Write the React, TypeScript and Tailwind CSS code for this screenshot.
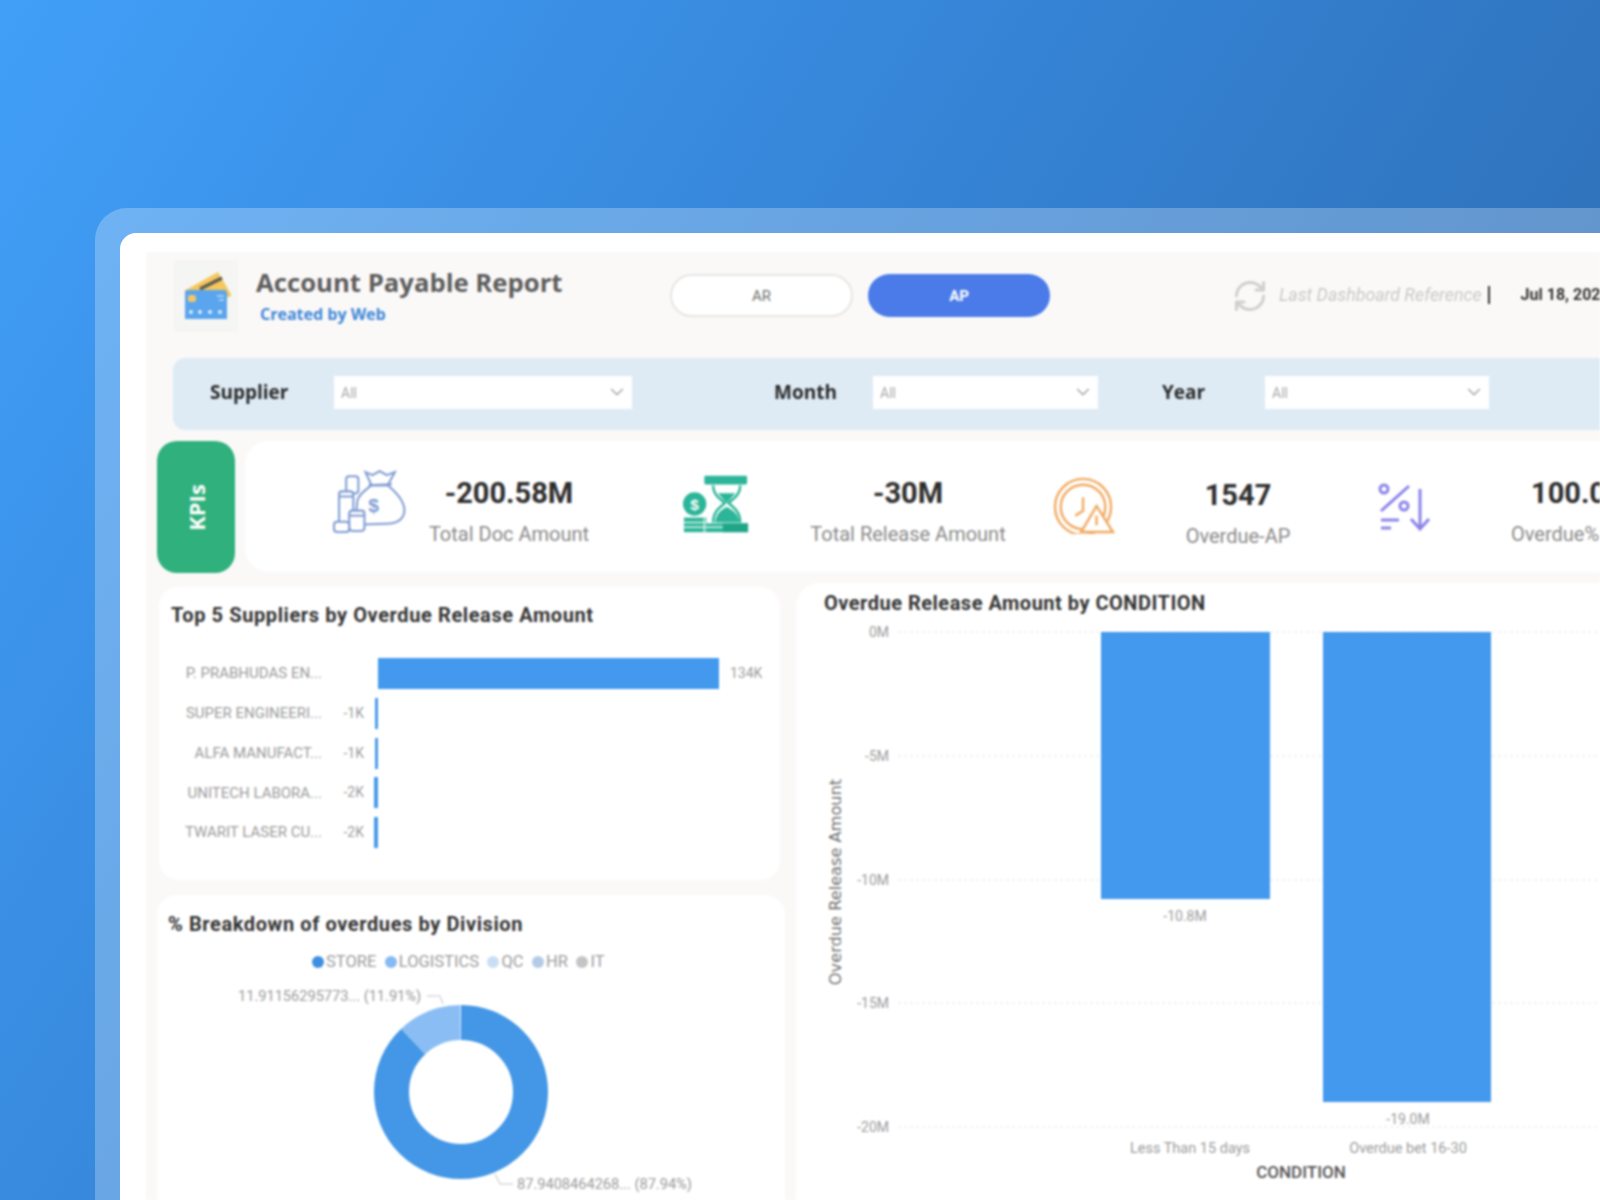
import React from "react";
import { ChevronDown, RefreshCw } from "lucide-react";

const din = "font-['Roboto',sans-serif]";
const seg = "font-['Open_Sans',sans-serif]";

function CardIcon() {
  return (
    <svg viewBox="14 10 50 50" className="w-[50px] h-[50px] shrink-0">
      <polygon points="17,32 51,13 65,37 30,46" fill="#f5c75c" />
      <path d="M33 30 L55 19" stroke="#5a5a55" strokeWidth="3.5" />
      <rect x="18" y="31" width="42" height="31" rx="3" fill="#5aa5ee" />
      <rect x="21" y="36" width="8" height="7" rx="2" fill="#f2c66a" />
      <path d="M50 37 h7 M52 41 h5" stroke="#bcdcf8" strokeWidth="1.5" />
      <g fill="#dcedfb">
        <circle cx="24" cy="53" r="2" /><circle cx="33" cy="53" r="2" /><circle cx="43" cy="53" r="2" /><circle cx="53" cy="53" r="2" />
      </g>
    </svg>
  );
}

function BagIcon() {
  return (
    <svg viewBox="14 10 72 62" className="w-[73px] h-[63px] shrink-0 mb-[11px]" fill="#fff" stroke="#7f9bd2" strokeWidth="2">
      <path d="M52 25 C 46 30 40 33 38 40 L 36 64 L 66 63 C 80 63 86 56 84 46 C 82 37 74 30 68 25 Z" />
      <path d="M46 12 L52 25 L68 25 L75 12 L67 15 L60 11 L53 15 Z" />
      <path d="M49 25 L72 24" />
      <rect x="27" y="16" width="12" height="17" rx="3" />
      <rect x="20" y="31" width="14" height="33" rx="3" />
      <path d="M20 36 h14" />
      <rect x="30" y="50" width="15" height="20" rx="3" />
      <path d="M30 55 h15" />
      <rect x="15" y="61" width="15" height="10" rx="3" />
      <text x="54" y="51" fontSize="19" fontWeight="700" stroke="none" fill="#7f9bd2" textAnchor="middle" fontFamily="'Liberation Sans',sans-serif">$</text>
    </svg>
  );
}

function GlassIcon() {
  return (
    <svg viewBox="12 12 70 62" className="w-[68px] h-[62px] shrink-0 mb-[6px]" fill="#2cb598">
      <rect x="35" y="14" width="44" height="9" rx="1.5" />
      <path d="M44 24 C 44 34 52 38 56 42 C 52 46 44 50 44 62 M72 24 C 72 34 64 38 60 42 C 64 46 72 50 72 62" fill="none" stroke="#2cb598" strokeWidth="2.5" />
      <path d="M49 32 H67 L58 42 Z" />
      <path d="M46 62 C 47 52 54 48 58 46 C 62 48 70 52 71 62 Z" />
      <circle cx="25" cy="43" r="12" />
      <text x="25" y="49" fontSize="16" fontWeight="700" fill="#fff" textAnchor="middle" fontFamily="'Liberation Sans',sans-serif">$</text>
      <rect x="14" y="57" width="23" height="15" />
      <rect x="37" y="63" width="43" height="9" />
      <rect x="54" y="63" width="26" height="9" fill="#1fa587" />
      <path d="M14 62 H37 M14 67 H54 M35 57 V72" stroke="#d9f3ec" strokeWidth="1.5" />
    </svg>
  );
}

function ClockIcon() {
  return (
    <svg viewBox="11 6 66 60" className="w-[64px] h-[58px] shrink-0 mb-[4px]" fill="none" stroke="#f2aa62" strokeWidth="2.5">
      <circle cx="43" cy="38" r="29" />
      <circle cx="43" cy="38" r="23" />
      <path d="M43 28 V42 L35 47" />
      <path d="M57 37 L74 64 H41 Z" fill="#fff" />
      <path d="M57 47 V57" />
    </svg>
  );
}

function PercentIcon() {
  return (
    <svg viewBox="19 14 54 52" className="w-[54px] h-[52px] shrink-0 mt-[4px]" fill="none" stroke="#8a84ea" strokeWidth="3">
      <circle cx="25" cy="20" r="4" />
      <path d="M50 17 L22 42" />
      <circle cx="45" cy="37" r="4" />
      <path d="M22 51 H40" />
      <path d="M22 59 H32" />
      <path d="M61 20 V60 M52 50 L61 60 L70 50" />
    </svg>
  );
}

function Kpi({ value, label, className }: { value: string; label: string; className: string }) {
  return (
    <div className={`flex flex-col shrink-0 ${className}`}>
      <div className={`${din} font-bold text-[29px] leading-[36px] text-[#2e2e2e] whitespace-nowrap`}>{value}</div>
      <div className={`${din} text-[20px] leading-[24px] mt-[11px] text-[#8a8a8a] whitespace-nowrap`}>{label}</div>
    </div>
  );
}

function Select({ width }: { width: string }) {
  return (
    <div className={`${width} h-[33px] mb-[4px] bg-white flex items-center justify-between pl-[7px] pr-[4px] shrink-0`}>
      <span className={`${din} text-[14px] text-[#a8a8a8] pt-[2px]`}>All</span>
      <ChevronDown className="w-[22px] h-[22px] text-[#9a9a9a]" strokeWidth={1.2} />
    </div>
  );
}

const rows = [
  { name: "P. PRABHUDAS EN...", val: "", neg: 0 },
  { name: "SUPER ENGINEERI...", val: "-1K", neg: 3 },
  { name: "ALFA MANUFACT...", val: "-1K", neg: 3 },
  { name: "UNITECH LABORA...", val: "-2K", neg: 4 },
  { name: "TWARIT LASER CU...", val: "-2K", neg: 4 },
];

function TopSuppliers() {
  return (
    <div className="ml-[2px] w-[621px] h-[293px] bg-white rounded-[20px] pt-[15px]">
      <h2 className={`${din} font-bold text-[20px] leading-[26px] tracking-[0.6px] text-[#333] pl-[12px] whitespace-nowrap`}>Top 5 Suppliers by Overdue Release Amount</h2>
      <div className="flex flex-col gap-[8.8px] mt-[30px]">
        {rows.map((r, i) => (
          <div key={r.name} className="flex items-center h-[31px]">
            <div className={`${din} w-[163px] text-right text-[15px] text-[#9c9c9c] whitespace-nowrap`}>{r.name}</div>
            <div className={`${din} w-[42px] text-right text-[14px] text-[#9c9c9c]`}>{r.val}</div>
            <div className="w-[14px] h-full flex justify-end">
              {r.neg > 0 && <div className="h-full bg-[#4a9be8]" style={{ width: r.neg }} />}
            </div>
            {i === 0 && <div className="w-[341px] h-full bg-[#4299ee]" />}
            {i === 0 && <div className={`${din} ml-[11px] text-[14px] text-[#9c9c9c]`}>134K</div>}
          </div>
        ))}
      </div>
    </div>
  );
}

const legend = [
  { n: "STORE", c: "bg-[#3f8fe0]" },
  { n: "LOGISTICS", c: "bg-[#86baf4]" },
  { n: "QC", c: "bg-[#c9def6]" },
  { n: "HR", c: "bg-[#b3cbe6]" },
  { n: "IT", c: "bg-[#c4c4c4]" },
];

function Breakdown() {
  return (
    <div className="mt-[15px] w-[628px] h-[320px] bg-white rounded-t-[20px] pt-[16px]">
      <h2 className={`${din} font-bold text-[20px] leading-[26px] tracking-[0.6px] text-[#333] pl-[11px] whitespace-nowrap`}>% Breakdown of overdues by Division</h2>
      <div className="flex items-center pl-[155px] mt-[13px] h-[24px]">
        {legend.map((l) => (
          <div key={l.n} className="flex items-center gap-[2px] mr-[8.5px]">
            <span className={`w-[12px] h-[12px] rounded-full ${l.c}`} />
            <span className={`${din} text-[16.5px] text-[#9c9c9c]`}>{l.n}</span>
          </div>
        ))}
      </div>
      <svg width="628" height="240" className="block mt-[1px]" fontFamily="Roboto,sans-serif" fontSize="14.6" fill="#9c9c9c">
        <g transform="rotate(-90 304 117)" fill="none" strokeWidth="35">
          <circle cx="304" cy="117" r="69.5" stroke="#4397e6" pathLength={100} strokeDasharray="87.94 12.06" />
          <circle cx="304" cy="117" r="69.5" stroke="#8bbdf5" pathLength={100} strokeDasharray="11.91 88.09" strokeDashoffset={-87.94} />
        </g>
        <path d="M270 21 H283 L286 29" fill="none" stroke="#c4c4c4" />
        <text x="81" y="26">11.91156295773... (11.91%)</text>
        <path d="M338 199 L343 209 H356" fill="none" stroke="#c4c4c4" />
        <text x="360" y="214">87.9408464268... (87.94%)</text>
      </svg>
    </div>
  );
}

function ConditionChart() {
  const ticks = [
    { l: "0M", y: 12 },
    { l: "-5M", y: 136 },
    { l: "-10M", y: 260 },
    { l: "-15M", y: 383 },
    { l: "-20M", y: 507 },
  ];
  return (
    <div className="w-[804px] h-[617px] bg-white rounded-tl-[24px] shrink-0 pt-[7px]">
      <h2 className={`${din} font-bold text-[20px] leading-[26px] tracking-[0.5px] text-[#333] pl-[28px] whitespace-nowrap`}>Overdue Release Amount by CONDITION</h2>
      <svg width="804" height="584" className="block mt-[4px]" fontFamily="Roboto,sans-serif" fontSize="14" fill="#9c9c9c">
        {ticks.map((t) => (
          <g key={t.l}>
            <line x1="102" x2="804" y1={t.y} y2={t.y} stroke="#e6e6e6" strokeDasharray="3 3" />
            <text x="93" y={t.y + 5} textAnchor="end">{t.l}</text>
          </g>
        ))}
        <rect x="305" y="12" width="169" height="267" fill="#4299ee" />
        <rect x="527" y="12" width="168" height="470" fill="#4299ee" />
        <text x="389" y="301" textAnchor="middle">-10.8M</text>
        <text x="612" y="504" textAnchor="middle">-19.0M</text>
        <text x="394" y="533" textAnchor="middle" fontSize="14.5">Less Than 15 days</text>
        <text x="612" y="533" textAnchor="middle" fontSize="14.5">Overdue bet 16-30</text>
        <text x="505" y="558" textAnchor="middle" fontSize="17" fontWeight="500" fill="#555">CONDITION</text>
        <text transform="translate(45 262) rotate(-90)" textAnchor="middle" fontSize="16.2" fill="#707070" fontFamily="'DejaVu Sans',sans-serif">Overdue Release Amount</text>
      </svg>
    </div>
  );
}

export default function App() {
  return (
    <div className="w-[1600px] h-[1200px] overflow-hidden bg-[linear-gradient(122deg,#419ff8_0%,#3583d5_45%,#2a65a6_100%)] pt-[208px] pl-[95px]">
      <div className="w-[1505px] h-[992px] bg-white/25 rounded-tl-[32px] pt-[25px] pl-[25px]">
        <div className="w-[1480px] h-[967px] bg-white rounded-tl-[16px] pt-[19px] pl-[26px] overflow-hidden">
          <div className="w-[1454px] h-[948px] bg-[#fbf9f8] blur-[0.8px]">
            {/* header */}
            <header className="h-[106px] flex items-center pl-[27px]">
              <div className="w-[65px] h-[72px] mb-[18px] bg-[#f5f5f4] rounded-[4px] flex items-center justify-center shrink-0 pb-[4px]">
                <CardIcon />
              </div>
              <div className="ml-[18px] w-[414px] mb-[20px] shrink-0">
                <h1 className={`${seg} font-bold text-[25.7px] leading-[34px] text-[#5c5c5c] whitespace-nowrap`}>Account Payable Report</h1>
                <div className={`${seg} font-bold text-[16px] leading-[20px] mt-[4px] text-[#3f88d8] pl-[4px]`}>Created by Web</div>
              </div>
              <div className="w-[183px] h-[43px] mb-[20px] rounded-full bg-white border-2 border-[#e8e6e4] flex items-center justify-center shrink-0 pt-[3px]">
                <span className={`${din} text-[15px] text-[#707070]`}>AR</span>
              </div>
              <div className="ml-[15px] w-[182px] h-[43px] mb-[20px] rounded-full bg-[#4a7be8] flex items-center justify-center shrink-0 pt-[3px]">
                <span className={`${din} font-bold text-[15px] text-white`}>AP</span>
              </div>
              <RefreshCw className="ml-[182px] mb-[18px] w-[36px] h-[36px] text-[#cfcfcf] shrink-0" strokeWidth={2} />
              <span className={`${din} italic ml-[11px] mb-[20px] text-[17.8px] text-[#c8c8c8] whitespace-nowrap`}>Last Dashboard Reference</span>
              <span className="ml-[6px] mb-[20px] w-[2px] h-[18px] bg-[#333] shrink-0" />
              <span className={`${din} font-bold ml-[31px] mb-[20px] text-[16px] text-[#333] whitespace-nowrap`}>Jul 18, 2024</span>
            </header>

            {/* filters */}
            <div className="ml-[27px] h-[72px] bg-[#deebf5] rounded-l-[12px] flex items-center pl-[37px]">
              <span className={`${seg} font-bold text-[19px] mb-[4px] text-[#2a2a2a] w-[124px] shrink-0`}>Supplier</span>
              <Select width="w-[298px]" />
              <span className={`${seg} font-bold text-[19px] mb-[4px] text-[#2a2a2a] ml-[142px] w-[99px] shrink-0`}>Month</span>
              <Select width="w-[225px]" />
              <span className={`${seg} font-bold text-[19px] mb-[4px] text-[#2a2a2a] ml-[64px] w-[103px] shrink-0`}>Year</span>
              <Select width="w-[224px]" />
            </div>

            {/* KPIs */}
            <div className="mt-[11px] ml-[11px] flex h-[132px]">
              <div className="w-[78px] h-[132px] bg-[#2fb07c] rounded-[20px] flex items-center justify-center shrink-0">
                <span className={`${seg} font-bold text-[22px] text-white -rotate-90`}>KPIs</span>
              </div>
              <div className="ml-[10px] flex-1 h-[131px] bg-white rounded-l-[24px] flex items-center overflow-hidden pl-[88px]">
                <BagIcon />
                <Kpi value="-200.58M" label="Total Doc Amount" className="items-center w-[170px] ml-[18px] mt-[8px]" />
                <div className="ml-[88px] shrink-0"><GlassIcon /></div>
                <Kpi value="-30M" label="Total Release Amount" className="items-center w-[200px] ml-[58px] mt-[8px]" />
                <div className="ml-[44px] shrink-0"><ClockIcon /></div>
                <Kpi value="1547" label="Overdue-AP" className="items-center w-[120px] ml-[62px] mt-[11px]" />
                <div className="ml-[80px] shrink-0"><PercentIcon /></div>
                <Kpi value="100.00%" label="Overdue%" className="items-start w-[120px] ml-[79px] mt-[8px] [&>div:first-child]:ml-[20px]" />
              </div>
            </div>

            {/* charts */}
            <div className="mt-[10px] ml-[11px] flex items-start">
              <div className="w-[628px] pt-[4px] shrink-0">
                <TopSuppliers />
                <Breakdown />
              </div>
              <div className="ml-[11px]">
                <ConditionChart />
              </div>
            </div>
          </div>
        </div>
      </div>
    </div>
  );
}
